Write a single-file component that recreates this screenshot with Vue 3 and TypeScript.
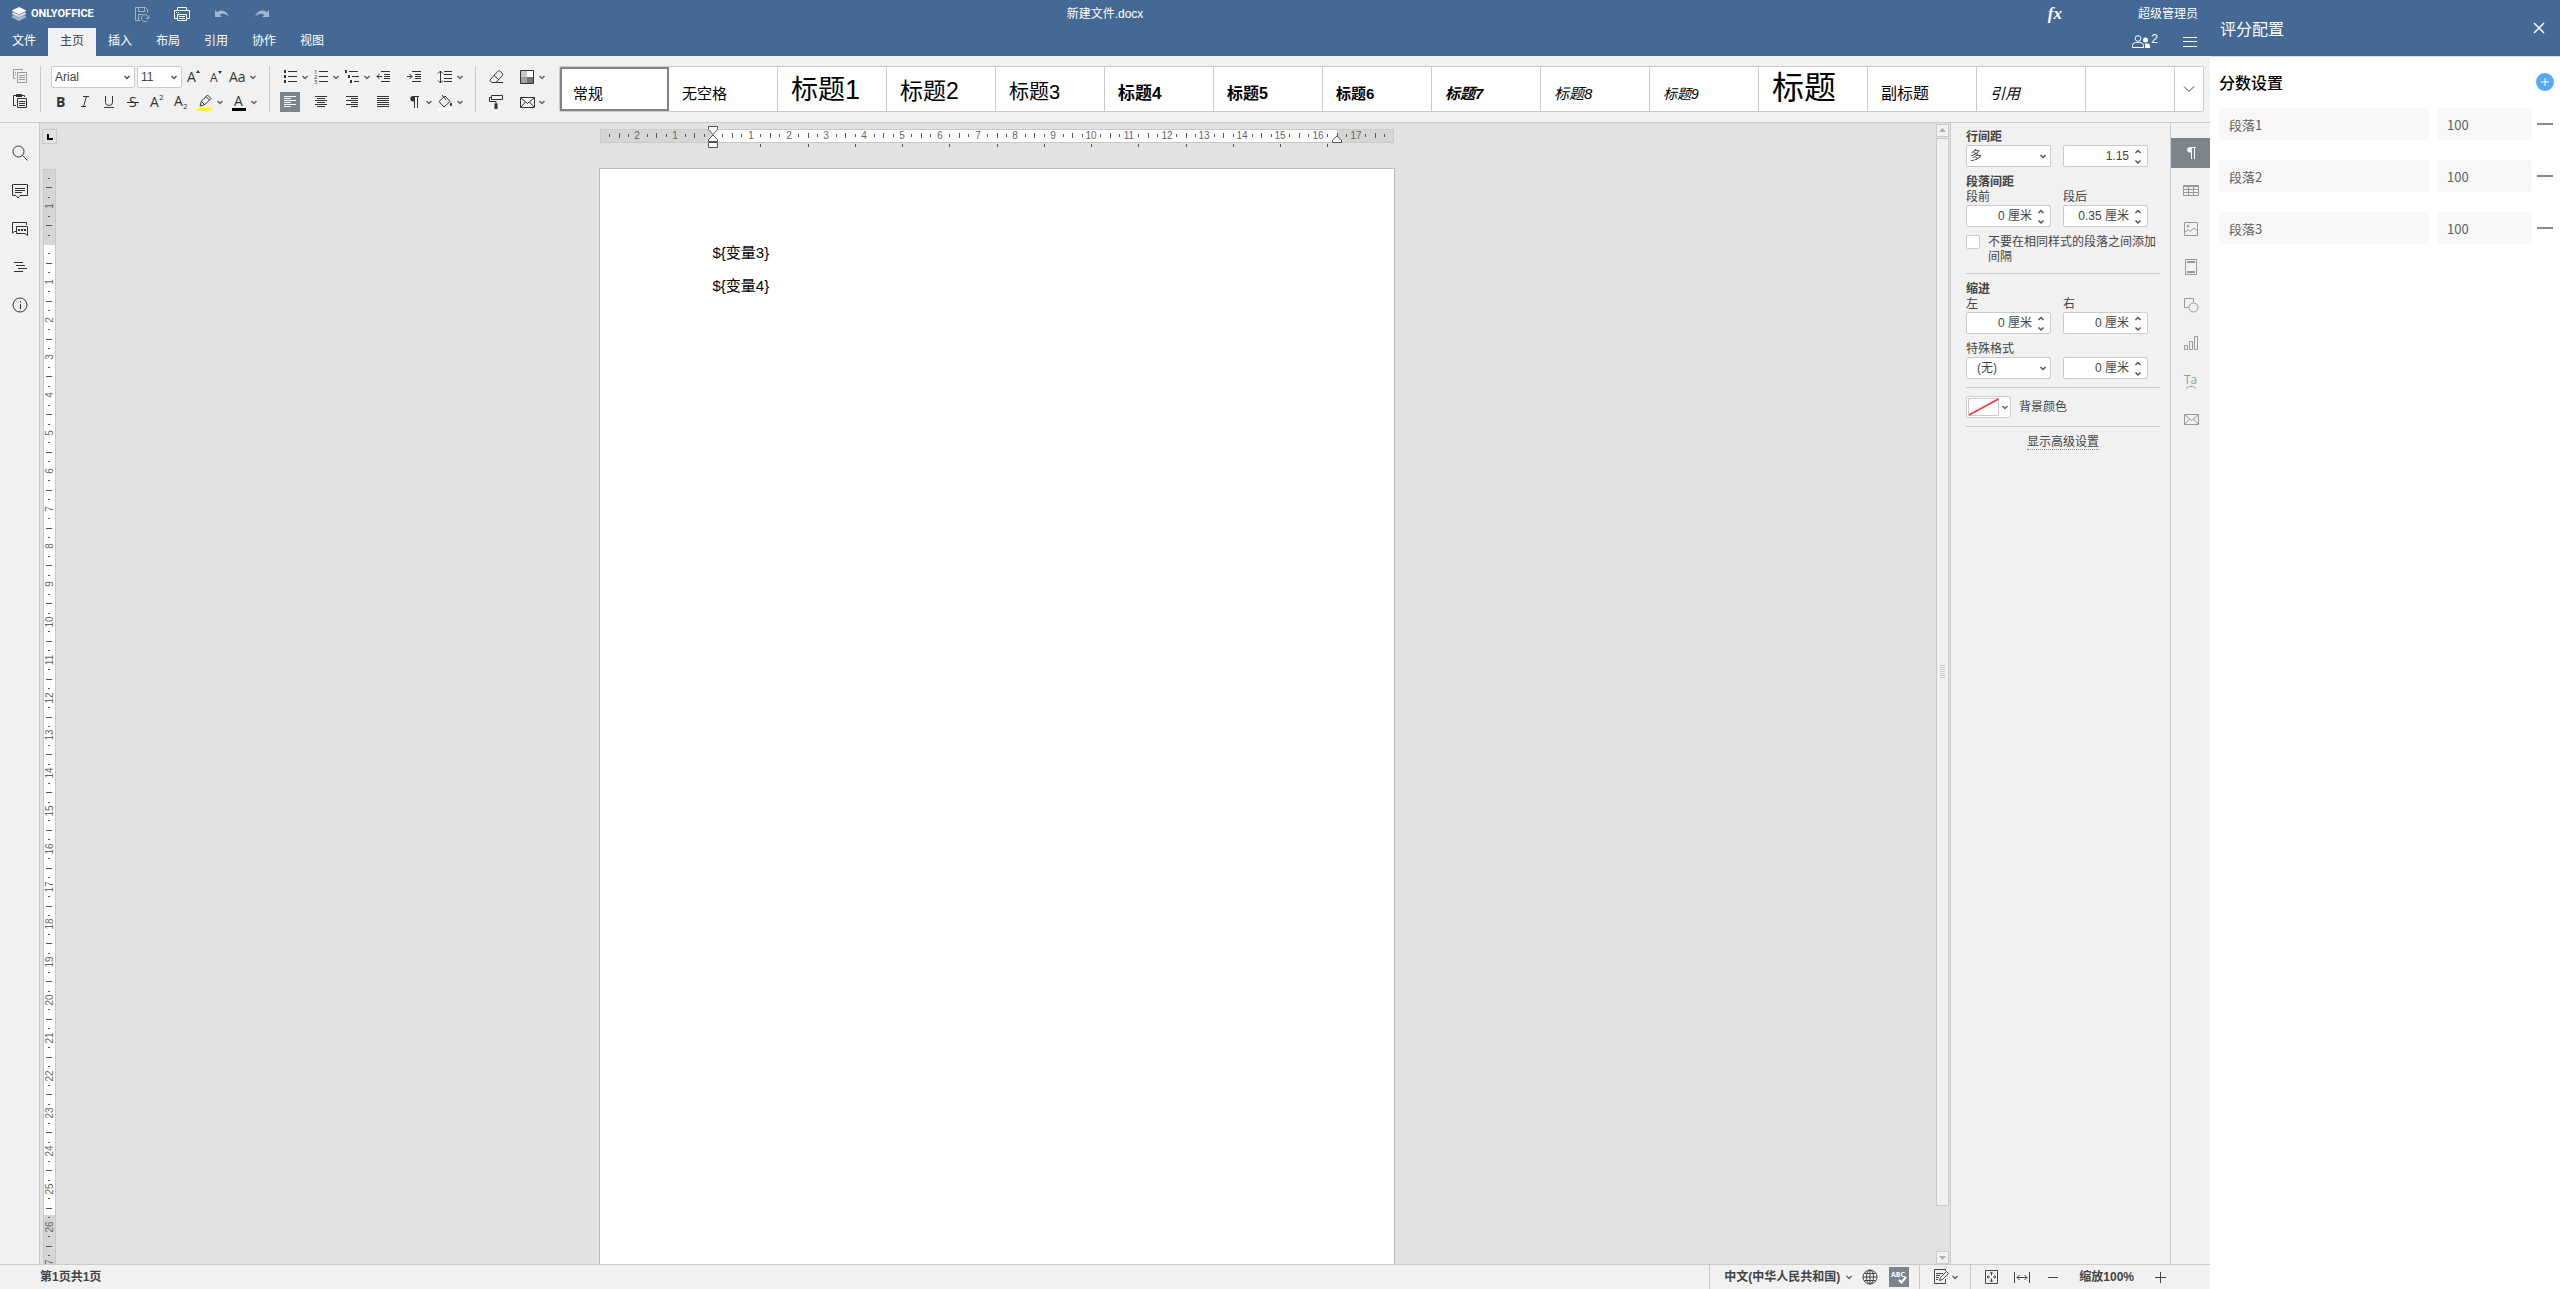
<script setup lang="ts">
import { ref } from 'vue'

const CM = 37.8

const icons: Record<string, string> = {
  save: '<path d="M8.5 16.5h-5v-13h10l2 2v3M6.5 3.500v4h6v-4M6.500 16v-5.500h4"/><path d="M16.500 14a3.500 3.500 0 1 0-1.500 3M16.800 11.500v2.800h-2.800"/>',
  print: '<path d="M5.500 6.500v-3h9v3M5.500 14.500h-3v-8h15v8h-3"/><path d="M5.500 10.500h9v6h-9zM7 12.500h6M7 14.500h6M4 8.500h1M6 8.500h1"/>',
  undo: '<path fill="currentColor" stroke="none" d="M3 6l2.200 2.200c3.800-3.200 9.500-2 11.800 4.800-3-3.500-6.500-4-9.300-2.300L10 13H3z"/>',
  redo: '<path fill="currentColor" stroke="none" d="M17 6l-2.200 2.200C11 5 5.300 6.200 3 13c3-3.500 6.500-4 9.300-2.300L10 13h7z"/>',
  copy: '<path d="M5.500 12.500h-2v-9h9v1M5 6.500h1M5 8.500h1M7.500 6.500h9v10h-9zM9 9.500h6M9 11.500h6M9 13.500h6"/>',
  paste: '<path d="M6 14.500H3.500v-10h11V6M7.500 7.500h9v9h-9zM9 10.500h6M9 12.500h6M9 14.500h6"/><path fill="currentColor" stroke="none" d="M6 3h6v3H6z"/>',
  grow: '<text x="3" y="15" font-size="14">A</text><path fill="currentColor" stroke="none" d="M12 6l2-3 2 3z"/>',
  shrink: '<text x="4" y="15" font-size="12">A</text><path fill="currentColor" stroke="none" d="M12 4h4l-2 3z"/>',
  case: '<text x="1" y="15" font-size="14">Aa</text>',
  bold: '<text x="5" y="15" font-size="14" font-weight="700">B</text>',
  italic: '<path d="M8 4.500h6M6 14.500h5M11.500 4.500l-3 10"/>',
  underline: '<path d="M6.500 4v6.500a3.500 3 0 0 0 7 0V4M5 15.500h10"/>',
  strike: '<text x="6" y="15" font-size="14">S</text><path d="M4 10.500h12"/>',
  sup: '<text x="3" y="15" font-size="14">A</text><text x="12" y="8" font-size="8">2</text>',
  sub: '<text x="3" y="14" font-size="14">A</text><text x="12" y="17" font-size="8">2</text>',
  marker: '<path d="M5 14l1.500-5 6-6 3.500 3.500-6 6zM6.500 9.500l3 3M11 4.500l3.500 3.500"/><path fill="#ff0" stroke="none" d="M3 16h14v3H3z"/>',
  color: '<text x="5" y="14" font-size="14">A</text><path fill="#000" stroke="none" d="M3 16h14v3H3z"/>',
  bullets: '<path d="M8 4.500h9M8 9.500h9M8 14.500h9"/><path fill="currentColor" stroke="none" d="M4 3h2v3H4zM4 8h2v3H4zM4 13h2v3H4z"/>',
  numbers: '<path d="M8 4.500h9M8 9.500h9M8 14.500h9"/><text x="3" y="7" font-size="6">1</text><text x="3" y="12" font-size="6">2</text><text x="3" y="17" font-size="6">3</text>',
  multi: '<path d="M7 4.500h9M10 9.500h7M12 14.500h5"/><path fill="currentColor" stroke="none" d="M3 3h2v3H3zM6 8h2v3H6zM8 13h2v3H8z"/>',
  outdent: '<path d="M8 4.500h9M11 7.500h6M11 9.500h6M11 11.500h6M8 14.500h9M9 9.500H4M6.500 7L4 9.500 6.500 12"/>',
  indent: '<path d="M8 4.500h9M11 7.500h6M11 9.500h6M11 11.500h6M8 14.500h9M3 9.500h5M5.500 7L8 9.500 5.500 12"/>',
  spacing: '<path d="M9 4.500h8M9 7.500h8M9 11.500h8M9 14.500h8M5.500 4v12M3 6.500L5.500 4 8 6.500M3 13.500L5.500 16 8 13.500"/>',
  left: '<path d="M4 4.500h12M4 6.500h7M4 8.500h12M4 10.500h7M4 12.500h12M4 14.500h7"/>',
  center: '<path d="M4 4.500h12M6 6.500h8M4 8.500h12M6 10.500h8M4 12.500h12M6 14.500h8"/>',
  right: '<path d="M4 4.500h12M9 6.500h7M4 8.500h12M9 10.500h7M4 12.500h12M9 14.500h7"/>',
  justify: '<path d="M4 4.500h12M4 6.500h12M4 8.500h12M4 10.500h12M4 12.500h12M4 14.500h12"/>',
  pilcrow: '<path fill="currentColor" stroke="none" d="M9 4h6v1h-1v11h-1V5h-2v11h-1v-6.500H9A2.700 2.700 0 0 1 9 4z"/>',
  fill: '<path d="M4 9.500L10 4l5 5.500-6 5.500zM7 3l4 5"/><path fill="currentColor" stroke="none" d="M16 10c1.500 2 1.500 4 0 4s-1.500-2 0-4z"/><path fill="#fff" stroke="none" d="M3 16h14v3H3z"/>',
  eraser: '<path d="M4 13l7.500-8.500c1-1 2-1 3 0l1.500 1.500c1 1 1 2 0 3L10 15.500H6L4 13.800zM8 8.500l5 4.500M10 15.500h7"/>',
  scheme: '<path fill="#c8c8c8" stroke="none" d="M4 4h6v6H4z"/><path fill="#fff" stroke="none" d="M10 4h6v6h-6z"/><path fill="#a0a0a0" stroke="none" d="M4 10h6v6H4z"/><path fill="#777" stroke="none" d="M10 10h6v6h-6z"/><path d="M3.500 3.500h13v13h-13z"/>',
  roller: '<path d="M5.500 3.500h11v4h-11zM5 5.500H3.500v4h6.500V12"/><path fill="currentColor" stroke="none" d="M8.500 11.500h3V17h-3z"/>',
  mail: '<path d="M3.500 5.500h14v10h-14zM4 6l6.500 5.500L17 6M4 15l4.500-5M17 15l-4.500-5"/>',
  search: '<circle cx="8.500" cy="8.500" r="5.500"/><path d="M12.500 12.500l5 5"/>',
  comment: '<path d="M2.500 3.500h15v11H10l-2 2.500-2-2.500H2.500zM5 7.500h10M5 9.500h10M5 11.500h7"/>',
  chat: '<path d="M6 12.500H4.500L2.500 14V3.500h14V6"/><path d="M6.500 7.500h11v9l-2.500-2H6.500z"/><path fill="currentColor" stroke="none" d="M8 10h2v2H8zM11 10h2v2h-2zM14 10h2v2h-2z"/>',
  nav: '<path d="M4 5.500h9M6 8.500h9M8 11.500h9M4 14.500h9"/>',
  info: '<circle cx="10" cy="10" r="7"/><path d="M10.500 9v5M10.500 6v1.500"/>',
  table: '<path d="M2.500 4.500h15v10h-15zM2.500 5.500h15M2.500 8.500h15M2.500 11.500h15M7.500 5v10M12.500 5v10"/>',
  image: '<path d="M3.500 3.500h13v13h-13zM4 13l3-2.500 2 2L13 9l3.500 3"/><circle cx="7" cy="7" r="1"/>',
  header: '<path d="M4.500 2.500h11v15h-11z"/><path fill="currentColor" stroke="none" d="M6 4h8v2H6zM6 14h8v2H6z"/>',
  shape: '<path d="M7 12.500H3.500v-9h9V7"/><circle cx="12.500" cy="12.500" r="4.500"/>',
  chart: '<path d="M3.500 12.500h3v4h-3zM8.500 8.500h3v8h-3zM13.500 3.500h3v13h-3z"/>',
  textart: '<text x="3" y="13" font-size="12">Ta</text><path d="M5 17.500c3-3 7-3 10 0"/>',
  globe: '<circle cx="10" cy="10" r="7"/><path d="M10 3v14M3 10h14M4.500 6.500h11M4.500 13.500h11"/><ellipse cx="10" cy="10" rx="3.500" ry="7"/>',
  spell: '<text x="2" y="10" font-size="7" font-weight="700">ABC</text><path stroke-width="2" d="M10 13l2.500 2.500L17 10"/>',
  track: '<path d="M15.500 12v4.500h-11v-14h11V4M6 6.500h7M6 8.500h4M6 10.500h3M6 12.500h2"/><path d="M9.500 13.500l1-3 6-6 2 2-6 6z"/>',
  fitPage: '<path d="M4.500 3.500h12v13h-12zM10.500 5v3.500M9 6.500L10.500 5 12 6.500M10.500 11.500V15M9 13.500l1.500 1.500 1.500-1.500M6 10h3M7.500 8.500L6 10l1.500 1.500M12 10h3M13.500 8.500L15 10l-1.500 1.500"/>',
  fitWidth: '<path d="M2.500 5v11M17.500 5v11M5 10.500h10M7.500 8L5 10.500 7.500 13M12.500 8l2.500 2.500-2.500 2.500"/>',
  minus: '<path d="M5 10.500h10"/>',
  plus: '<path d="M5 10.500h11M10.500 5v11"/>',
  users: '<circle cx="7" cy="6.500" r="2.800"/><path d="M1.500 15.500v-2c0-2.500 2-3 5.500-3s5.500.5 5.500 3v2z"/><circle cx="14.500" cy="8" r="2.500" fill="currentColor" stroke="none"/><path fill="currentColor" stroke="none" d="M14 11.500h3c1.500.5 2 1.500 2 2.500v2h-5z"/>',
  menu: '<path d="M3 5.500h14M3 9.500h14M3 14.500h14"/>',
}

interface Tool { icon: string; title: string; more?: boolean; active?: boolean; off?: boolean }

const tabs = ['文件', '主页', '插入', '布局', '引用', '协作', '视图']
const activeTab = ref('主页')

const clipboard: Tool[] = [
  { icon: 'copy', title: '复制', off: true },
  { icon: 'paste', title: '粘贴' },
]
const sizeTools: Tool[] = [
  { icon: 'grow', title: '增大字号' },
  { icon: 'shrink', title: '减小字号' },
  { icon: 'case', title: '更改大小写', more: true },
]
const fontTools: Tool[] = [
  { icon: 'bold', title: '加粗' },
  { icon: 'italic', title: '斜体' },
  { icon: 'underline', title: '下划线' },
  { icon: 'strike', title: '删除线' },
  { icon: 'sup', title: '上标' },
  { icon: 'sub', title: '下标' },
  { icon: 'marker', title: '突出显示', more: true },
  { icon: 'color', title: '字体颜色', more: true },
]
const paraTools: Tool[] = [
  { icon: 'bullets', title: '项目符号', more: true },
  { icon: 'numbers', title: '编号', more: true },
  { icon: 'multi', title: '多级列表', more: true },
  { icon: 'outdent', title: '减少缩进' },
  { icon: 'indent', title: '增加缩进' },
  { icon: 'spacing', title: '行距', more: true },
  { icon: 'left', title: '左对齐', active: true },
  { icon: 'center', title: '居中' },
  { icon: 'right', title: '右对齐' },
  { icon: 'justify', title: '两端对齐' },
  { icon: 'pilcrow', title: '非打印字符', more: true },
  { icon: 'fill', title: '底纹', more: true },
]
const extraTools: Tool[] = [
  { icon: 'eraser', title: '清除样式' },
  { icon: 'scheme', title: '配色方案', more: true },
  { icon: 'roller', title: '复制样式' },
  { icon: 'mail', title: '邮件合并', more: true },
]

const styles = [
  { name: '常规', cls: 's15' },
  { name: '无空格', cls: 's15' },
  { name: '标题1', cls: 's27' },
  { name: '标题2', cls: 's23' },
  { name: '标题3', cls: 's20' },
  { name: '标题4', cls: 's17 b' },
  { name: '标题5', cls: 's16 b' },
  { name: '标题6', cls: 's15 b' },
  { name: '标题7', cls: 's15 b i' },
  { name: '标题8', cls: 's15 i' },
  { name: '标题9', cls: 's14 i' },
  { name: '标题', cls: 's32' },
  { name: '副标题', cls: 's16' },
  { name: '引用', cls: 's15 i' },
]
const activeStyle = ref('常规')

const leftTools: Tool[] = [
  { icon: 'search', title: '查找' },
  { icon: 'comment', title: '批注' },
  { icon: 'chat', title: '聊天' },
  { icon: 'nav', title: '导航' },
  { icon: 'info', title: '关于' },
]
const rightTools: Tool[] = [
  { icon: 'pilcrow', title: '段落设置', active: true },
  { icon: 'table', title: '表格设置' },
  { icon: 'image', title: '图片设置' },
  { icon: 'header', title: '页眉和页脚设置' },
  { icon: 'shape', title: '形状设置' },
  { icon: 'chart', title: '图表设置' },
  { icon: 'textart', title: '艺术字设置' },
  { icon: 'mail', title: '邮件合并' },
]

interface Mark { pos: number; kind: 'num' | 'half' | 'quarter'; label: string }

function marks(origin: number, from: number, to: number): Mark[] {
  const out: Mark[] = []
  for (let q = from; q <= to; q++) {
    if (q === 0) continue
    const kind = q % 4 === 0 ? 'num' : q % 2 === 0 ? 'half' : 'quarter'
    out.push({ pos: Math.round(origin + (q * CM) / 4), kind, label: String(Math.abs(q) / 4) })
  }
  return out
}

const hMarks = marks(113, -11, 71)
const vMarks = marks(75, -7, 110)
const tabStops = Array.from({ length: 13 }, (_, i) => Math.round(113 + (i + 1) * CM * 1.25))

const paragraphs = ['${变量3}', '${变量4}']
const scores = ref([
  { name: '段落1', score: '100' },
  { name: '段落2', score: '100' },
  { name: '段落3', score: '100' },
])

const before = ref('0 厘米')
const after = ref('0.35 厘米')
const lineValue = ref('1.15')
const indentLeft = ref('0 厘米')
const indentRight = ref('0 厘米')
const special = ref('0 厘米')

function addScore() {
  scores.value.push({ name: `段落${scores.value.length + 1}`, score: '100' })
}
</script>

<template>
  <div class="app">
    <div class="office">
      <header class="top">
        <div class="title-row">
          <div class="brand">
            <svg class="logo" width="16" height="16" viewBox="0 0 16 16">
              <path fill="#fff" fill-opacity=".5" d="M1 10l1.500-.7L8 11.700l5.500-2.400L15 10v1.500l-7 3.500-7-3.500z" />
              <path fill="#fff" fill-opacity=".75" d="M1 7l1.500-.7L8 8.700l5.500-2.400L15 7v1.200l-7 3.300-7-3.300z" />
              <path fill="#fff" d="M8 1l7 3.200v.8L8 8.200 1 5v-.8z" />
            </svg>
            <span class="brand-name">ONLYOFFICE</span>
            <div class="quick">
              <button class="tool dim" aria-label="保存"><svg class="ico" viewBox="0 0 20 20" v-html="icons.save" /></button>
              <button class="tool" aria-label="打印"><svg class="ico" viewBox="0 0 20 20" v-html="icons.print" /></button>
              <button class="tool dim" aria-label="撤销"><svg class="ico" viewBox="0 0 20 20" v-html="icons.undo" /></button>
              <button class="tool dim" aria-label="重做"><svg class="ico" viewBox="0 0 20 20" v-html="icons.redo" /></button>
            </div>
          </div>
          <div class="doc-name">新建文件.docx</div>
          <div class="account">
            <span class="fx">fx</span>
            <span>超级管理员</span>
          </div>
        </div>
        <div class="tab-row">
          <nav class="tabs">
            <button v-for="t in tabs" :key="t" class="tab" :class="{ on: t === activeTab }" @click="activeTab = t">{{ t }}</button>
          </nav>
          <div class="people">
            <button class="people-btn" aria-label="用户"><svg class="ico" viewBox="0 0 20 20" v-html="icons.users" /><span>2</span></button>
            <button class="tool" aria-label="菜单"><svg class="ico" viewBox="0 0 20 20" v-html="icons.menu" /></button>
          </div>
        </div>
      </header>

      <div class="toolbar">
        <div class="group clip">
          <button v-for="t in clipboard" :key="t.icon" class="tool" :class="{ off: t.off }" :aria-label="t.title">
            <svg class="ico" viewBox="0 0 20 20" v-html="icons[t.icon]" />
          </button>
        </div>
        <div class="sep" />
        <div class="group">
          <div class="row first">
            <label class="combo font-name">
              <select aria-label="字体"><option>Arial</option></select>
              <svg class="arrow" viewBox="0 0 10 10"><path d="M2.500 4L5 6.500 7.500 4" /></svg>
            </label>
            <label class="combo font-size">
              <select aria-label="字号"><option>11</option></select>
              <svg class="arrow" viewBox="0 0 10 10"><path d="M2.500 4L5 6.500 7.500 4" /></svg>
            </label>
            <div v-for="t in sizeTools" :key="t.icon" class="split">
              <button class="tool" :aria-label="t.title"><svg class="ico" viewBox="0 0 20 20" v-html="icons[t.icon]" /></button>
              <button v-if="t.more" class="more" :aria-label="t.title"><svg class="chev" viewBox="0 0 10 10"><path d="M2.500 4L5 6.500 7.500 4" /></svg></button>
            </div>
          </div>
          <div class="row">
            <div v-for="t in fontTools" :key="t.icon" class="split">
              <button class="tool" :aria-label="t.title"><svg class="ico" viewBox="0 0 20 20" v-html="icons[t.icon]" /></button>
              <button v-if="t.more" class="more" :aria-label="t.title"><svg class="chev" viewBox="0 0 10 10"><path d="M2.500 4L5 6.500 7.500 4" /></svg></button>
            </div>
          </div>
        </div>
        <div class="sep" />
        <div class="grid six">
          <div v-for="t in paraTools" :key="t.icon" class="split">
            <button class="tool" :class="{ active: t.active }" :aria-label="t.title"><svg class="ico" viewBox="0 0 20 20" v-html="icons[t.icon]" /></button>
            <button v-if="t.more" class="more" :aria-label="t.title"><svg class="chev" viewBox="0 0 10 10"><path d="M2.500 4L5 6.500 7.500 4" /></svg></button>
          </div>
        </div>
        <div class="sep" />
        <div class="grid two">
          <div v-for="t in extraTools" :key="t.icon" class="split">
            <button class="tool" :aria-label="t.title"><svg class="ico" viewBox="0 0 20 20" v-html="icons[t.icon]" /></button>
            <button v-if="t.more" class="more" :aria-label="t.title"><svg class="chev" viewBox="0 0 10 10"><path d="M2.500 4L5 6.500 7.500 4" /></svg></button>
          </div>
        </div>
        <div class="gallery">
          <button v-for="s in styles" :key="s.name" class="style" :class="{ picked: s.name === activeStyle }" @click="activeStyle = s.name">
            <span :class="s.cls">{{ s.name }}</span>
          </button>
          <div class="style-rest" />
          <button class="gallery-more" aria-label="更多样式">
            <svg width="16" height="16" viewBox="0 0 16 16"><path d="M3 5.500l5 5 5-5" /></svg>
          </button>
        </div>
      </div>

      <div class="work">
        <aside class="rail left-rail">
          <button v-for="t in leftTools" :key="t.icon" class="rail-btn" :aria-label="t.title">
            <svg class="ico" viewBox="0 0 20 20" v-html="icons[t.icon]" />
          </button>
        </aside>

        <main class="editor">
          <div class="v-col">
            <button class="corner" aria-label="制表位"><svg width="13" height="13" viewBox="0 0 13 13"><path fill="#000" d="M4 4h2v4h4v2H4z" /></svg></button>
            <div class="v-ruler">
              <svg width="13" height="1123" viewBox="0 0 13 1123">
                <rect x=".5" y=".5" width="12" height="1122" fill="#d5d5d5" stroke="#c8c8c8" />
                <rect x="1" y="76" width="11" height="970" fill="#fff" />
                <template v-for="m in vMarks" :key="m.pos">
                  <text v-if="m.kind === 'num'" :transform="`translate(10 ${m.pos}) rotate(-90)`">{{ m.label }}</text>
                  <rect v-else-if="m.kind === 'half'" x="3" :y="m.pos" width="6" height="1" />
                  <rect v-else x="5" :y="m.pos" width="2" height="1" />
                </template>
              </svg>
            </div>
          </div>
          <div class="canvas">
            <svg class="h-ruler" width="794" height="22" viewBox="0 0 794 22">
              <rect x=".5" y="3.500" width="793" height="13" fill="#d5d5d5" stroke="#c8c8c8" />
              <rect x="113" y="4" width="624" height="12" fill="#fff" />
              <template v-for="m in hMarks" :key="m.pos">
                <text v-if="m.kind === 'num'" :x="m.pos" y="13">{{ m.label }}</text>
                <rect v-else-if="m.kind === 'half'" :x="m.pos" y="7" width="1" height="5" />
                <rect v-else :x="m.pos" y="8" width="1" height="3" />
              </template>
              <rect v-for="s in tabStops" :key="s" :x="s" y="18" width="1" height="3" />
              <g fill="#fff" stroke="#555">
                <path d="M108.500.5h9v3l-4.500 5-4.500-5z" />
                <path d="M113 9l4.500 4.500v2h-9v-2z" />
                <path d="M108.500 16.500h9v5h-9z" />
                <path d="M737 10l4.500 4v2.500h-9V14z" />
              </g>
            </svg>
            <article class="page">
              <p v-for="p in paragraphs" :key="p">{{ p }}</p>
            </article>
          </div>
          <div class="scroll">
            <button class="scroll-btn" aria-label="向上滚动"><svg width="11" height="11" viewBox="0 0 11 11"><path fill="#adadad" d="M2 7l3.500-4L9 7z" /></svg></button>
            <div class="track">
              <div class="thumb"><i v-for="n in 7" :key="n" /></div>
            </div>
            <button class="scroll-btn" aria-label="向下滚动"><svg width="11" height="11" viewBox="0 0 11 11"><path fill="#adadad" d="M2 4l3.500 4L9 4z" /></svg></button>
          </div>
        </main>

        <aside class="settings">
          <label class="cap strong" for="line-rule">行间距</label>
          <div class="pair">
            <div class="combo">
              <select id="line-rule"><option>多</option></select>
              <svg class="arrow" viewBox="0 0 10 10"><path d="M2.500 4L5 6.500 7.500 4" /></svg>
            </div>
            <div class="spin">
              <input v-model="lineValue" aria-label="行间距值" />
              <svg viewBox="0 0 18 20"><path d="M6.500 7L9 4.500 11.500 7M6.500 14.500L9 17l2.500-2.500" /></svg>
            </div>
          </div>

          <div class="block">
            <div class="cap strong">段落间距</div>
            <div class="pair">
              <div>
                <label class="cap" for="before">段前</label>
                <div class="spin">
                  <input id="before" v-model="before" />
                  <svg viewBox="0 0 18 20"><path d="M6.500 7L9 4.500 11.500 7M6.500 14.500L9 17l2.500-2.500" /></svg>
                </div>
              </div>
              <div>
                <label class="cap" for="after">段后</label>
                <div class="spin">
                  <input id="after" v-model="after" />
                  <svg viewBox="0 0 18 20"><path d="M6.500 7L9 4.500 11.500 7M6.500 14.500L9 17l2.500-2.500" /></svg>
                </div>
              </div>
            </div>
          </div>

          <label class="check">
            <input type="checkbox" />
            <span>不要在相同样式的段落之间添加间隔</span>
          </label>
          <hr />

          <div class="block">
            <div class="cap strong">缩进</div>
            <div class="pair">
              <div>
                <label class="cap" for="ind-left">左</label>
                <div class="spin">
                  <input id="ind-left" v-model="indentLeft" />
                  <svg viewBox="0 0 18 20"><path d="M6.500 7L9 4.500 11.500 7M6.500 14.500L9 17l2.500-2.500" /></svg>
                </div>
              </div>
              <div>
                <label class="cap" for="ind-right">右</label>
                <div class="spin">
                  <input id="ind-right" v-model="indentRight" />
                  <svg viewBox="0 0 18 20"><path d="M6.500 7L9 4.500 11.500 7M6.500 14.500L9 17l2.500-2.500" /></svg>
                </div>
              </div>
            </div>
          </div>

          <div class="block">
            <label class="cap" for="special">特殊格式</label>
            <div class="pair">
              <div class="combo inset">
                <select id="special"><option>(无)</option></select>
                <svg class="arrow" viewBox="0 0 10 10"><path d="M2.500 4L5 6.500 7.500 4" /></svg>
              </div>
              <div class="spin">
                <input v-model="special" aria-label="特殊格式值" />
                <svg viewBox="0 0 18 20"><path d="M6.500 7L9 4.500 11.500 7M6.500 14.500L9 17l2.500-2.500" /></svg>
              </div>
            </div>
          </div>
          <hr />

          <div class="fill-row">
            <button id="bg-color" class="swatch">
              <svg width="31" height="18" viewBox="0 0 31 18"><path d="M.5.5h30v17H.5z" fill="#fff" stroke="#cbcbcb" /><path d="M1 17L30.500 1" stroke="#f33" stroke-width="1.500" /></svg>
              <svg class="chev" viewBox="0 0 10 10"><path d="M2.500 4L5 6.500 7.500 4" /></svg>
            </button>
            <label for="bg-color">背景颜色</label>
          </div>
          <hr />
          <div class="advanced"><a href="#">显示高级设置</a></div>
        </aside>

        <aside class="rail right-rail">
          <button v-for="t in rightTools" :key="t.icon" class="rail-btn" :class="{ active: t.active }" :aria-label="t.title">
            <svg class="ico" viewBox="0 0 20 20" v-html="icons[t.icon]" />
          </button>
        </aside>
      </div>

      <footer class="status">
        <span class="pages">第1页共1页</span>
        <div class="cell lang">
          <button class="text-btn">中文(中华人民共和国)<svg class="chev" viewBox="0 0 10 10"><path d="M2.500 4L5 6.500 7.500 4" /></svg></button>
          <button class="tool" aria-label="文档语言"><svg class="ico" viewBox="0 0 20 20" v-html="icons.globe" /></button>
          <button class="tool active" aria-label="拼写检查"><svg class="ico" viewBox="0 0 20 20" v-html="icons.spell" /></button>
        </div>
        <div class="cell review">
          <button class="tool" aria-label="修订"><svg class="ico" viewBox="0 0 20 20" v-html="icons.track" /></button>
          <button class="more" aria-label="修订选项"><svg class="chev" viewBox="0 0 10 10"><path d="M2.500 4L5 6.500 7.500 4" /></svg></button>
        </div>
        <div class="cell zoom">
          <button class="tool" aria-label="适合页面"><svg class="ico" viewBox="0 0 20 20" v-html="icons.fitPage" /></button>
          <button class="tool" aria-label="适合宽度"><svg class="ico" viewBox="0 0 20 20" v-html="icons.fitWidth" /></button>
          <button class="tool" aria-label="缩小"><svg class="ico" viewBox="0 0 20 20" v-html="icons.minus" /></button>
          <button class="text-btn level">缩放100%</button>
          <button class="tool" aria-label="放大"><svg class="ico" viewBox="0 0 20 20" v-html="icons.plus" /></button>
        </div>
      </footer>
    </div>

    <section class="drawer">
      <header class="drawer-head">
        <h2>评分配置</h2>
        <button aria-label="关闭"><svg width="12" height="12" viewBox="0 0 12 12"><path d="M1 1l10 10M11 1L1 11" /></svg></button>
      </header>
      <div class="drawer-body">
        <div class="score-title">
          <h3>分数设置</h3>
          <button aria-label="添加" @click="addScore">
            <svg width="18" height="18" viewBox="0 0 18 18"><circle cx="9" cy="9" r="9" fill="#57a9fb" /><path d="M5 9h8M9 5v8" stroke="#fff" /></svg>
          </button>
        </div>
        <div v-for="(s, n) in scores" :key="n" class="score">
          <input v-model="s.name" class="score-name" aria-label="名称" />
          <input v-model="s.score" class="score-value" aria-label="分数" />
          <button aria-label="删除" @click="scores.splice(n, 1)"><svg width="18" height="18" viewBox="0 0 18 18"><path d="M1 9h16" stroke="#606266" stroke-width="1.500" /></svg></button>
        </div>
      </div>
    </section>
  </div>
</template>

<style>
body {
  margin: 0;
}
</style>

<style scoped>
.app {
  display: flex;
  height: 100vh;
  overflow: hidden;
  font: 12px/15px "Liberation Sans", "Noto Sans CJK SC", sans-serif;
  color: #444;
  background: #fff;
}
.app * {
  box-sizing: border-box;
}
button,
input,
select {
  font: inherit;
  color: inherit;
  margin: 0;
  padding: 0;
  border: 0;
  background: none;
  border-radius: 0;
}
svg {
  display: block;
  flex: none;
}
.ico {
  width: 20px;
  height: 20px;
  fill: none;
  stroke: currentColor;
  font-family: "Open Sans", sans-serif;
}
.ico :deep(text) {
  fill: currentColor;
  stroke: none;
}
.chev {
  width: 10px;
  height: 10px;
  fill: none;
  stroke: #666;
  stroke-width: 1.5;
}
.office {
  flex: 1;
  min-width: 0;
  display: flex;
  flex-direction: column;
  background: #f1f1f1;
}

/* header */
.top {
  background: #446995;
  color: #fff;
}
.title-row {
  display: grid;
  grid-template-columns: 1fr auto 1fr;
  align-items: center;
  height: 28px;
}
.brand {
  display: flex;
  align-items: center;
  padding-left: 11px;
}
.brand-name {
  width: 68px;
  font: 700 11px/16px Roboto, sans-serif;
  margin-left: 4px;
}
.quick {
  display: flex;
  gap: 20px;
  margin-left: 33px;
}
.dim {
  opacity: 0.5;
}
.account {
  display: flex;
  justify-content: flex-end;
  align-items: center;
  gap: 76px;
  padding-right: 12px;
}
.fx {
  font: italic 700 17px/20px "Liberation Serif", serif;
}
.tab-row {
  display: flex;
  justify-content: space-between;
  height: 28px;
}
.tabs {
  display: flex;
}
.tab {
  padding: 0 12px 2px;
}
.tab.on {
  background: #f1f1f1;
  color: #444;
}
.people {
  display: flex;
  align-items: center;
  gap: 22px;
  padding-right: 10px;
}
.people-btn {
  display: flex;
}

/* toolbar */
.toolbar {
  display: flex;
  height: 67px;
  padding: 10px 6px 10px 10px;
  border-bottom: 1px solid #cbcbcb;
  color: #333;
}
.sep {
  width: 1px;
  height: 46px;
  margin: 0 10px;
  background: #cbcbcb;
}
.group {
  display: flex;
  flex-direction: column;
  gap: 4px;
}
.clip {
  gap: 5px;
}
.off {
  color: #999;
}
.row {
  display: flex;
  gap: 4px;
  height: 20px;
}
.row.first {
  gap: 2px;
  height: 22px;
  align-items: center;
}
.split {
  display: flex;
}
.tool {
  width: 20px;
  height: 20px;
}
.tool.active {
  background: #7d858c;
  color: #fff;
}
.more {
  width: 10px;
  height: 20px;
}
.grid {
  display: grid;
  grid-template-rows: 20px 20px;
  gap: 5px 1px;
  padding-top: 1px;
}
.six {
  grid-template-columns: repeat(6, 30px);
}
.two {
  grid-template-columns: repeat(2, 30px);
}
.combo {
  display: grid;
  grid-template-columns: 1fr 14px;
  align-items: center;
  width: 85px;
  height: 22px;
  border: 1px solid #cbcbcb;
  border-radius: 2px;
  background: #fff;
  color: #444;
}
.combo select {
  grid-area: 1 / 1 / 2 / 3;
  height: 20px;
  padding-left: 3px;
  appearance: none;
}
.combo.inset select {
  padding-left: 10px;
}
.arrow {
  grid-area: 1 / 2;
  justify-self: center;
  width: 10px;
  height: 10px;
  fill: none;
  stroke: #555;
  stroke-width: 1.5;
  pointer-events: none;
}
.font-name {
  width: 84px;
}
.font-size {
  width: 45px;
}
.gallery {
  flex: 1;
  min-width: 0;
  display: flex;
  height: 46px;
  margin-left: 12px;
  border: 1px solid #cbcbcb;
  border-radius: 2px;
  background: #fff;
  color: #000;
  overflow: hidden;
}
.style {
  flex: none;
  display: flex;
  align-items: baseline;
  width: 109px;
  padding-left: 13px;
  border-right: 1px solid #cbcbcb;
  line-height: 1;
  white-space: nowrap;
}
.style::before {
  content: "";
  height: 32px;
}
.picked {
  box-shadow: inset 2px 2px #848484, inset -1px -2px #848484;
  border-right-color: #848484;
}
.style-rest {
  flex: 1;
  border-right: 1px solid #cbcbcb;
}
.gallery-more {
  flex: none;
  display: flex;
  align-items: center;
  justify-content: center;
  width: 28px;
}
.gallery-more svg {
  fill: none;
  stroke: #444;
}
.s14 { font-size: 14px; }
.s15 { font-size: 15px; }
.s16 { font-size: 16px; }
.s17 { font-size: 17px; }
.s20 { font-size: 20px; }
.s23 { font-size: 23px; }
.s27 { font-size: 27px; }
.s32 { font-size: 32px; }
.b { font-weight: 700; }
.i { font-style: italic; }

/* work area */
.work {
  flex: 1;
  min-height: 0;
  display: flex;
}
.rail {
  flex: none;
  display: flex;
  flex-direction: column;
  gap: 8px;
  width: 40px;
  padding-top: 15px;
}
.left-rail {
  border-right: 1px solid #cbcbcb;
  color: #333;
}
.right-rail {
  border-left: 1px solid #cbcbcb;
  color: #999;
}
.rail-btn {
  display: flex;
  align-items: center;
  justify-content: center;
  height: 30px;
}
.rail-btn.active {
  background: #7d858c;
  color: #fff;
}
.editor {
  flex: 1;
  min-width: 0;
  display: flex;
  background: #e2e2e2;
}
.v-col {
  flex: none;
  display: flex;
  flex-direction: column;
  width: 17px;
  padding: 6px 0 0 2px;
}
.corner {
  flex: none;
  width: 15px;
  height: 15px;
  border: 1px solid #c8c8c8;
}
.v-ruler {
  flex: 1;
  min-height: 0;
  margin: 25px 0 0 1px;
  overflow: hidden;
}
.v-ruler rect,
.h-ruler rect {
  shape-rendering: crispEdges;
}
.v-ruler svg,
.h-ruler {
  font-size: 10px;
  fill: #555;
}
.v-ruler text,
.h-ruler text {
  text-anchor: middle;
  fill: #666;
}
.canvas {
  flex: 1;
  min-width: 0;
  display: flex;
  flex-direction: column;
  align-items: center;
  padding-top: 3px;
  overflow: hidden;
}
.page {
  flex: 1;
  width: 796px;
  margin-top: 20px;
  padding: 75px 113px 0;
  border: 1px solid #bbbec2;
  border-bottom: 0;
  background: #fff;
  color: #000;
  font-size: 15px;
  line-height: 18px;
}
.page p {
  margin: 0 0 15px;
}
.scroll {
  flex: none;
  display: flex;
  flex-direction: column;
  gap: 1px;
  width: 14px;
  padding: 1px 1px 0 0;
}
.scroll-btn {
  flex: none;
  width: 13px;
  height: 13px;
  border: 1px solid #cbcbcb;
  background: #f1f1f1;
}
.track {
  flex: 1;
}
.thumb {
  display: flex;
  flex-direction: column;
  align-items: center;
  justify-content: center;
  gap: 1px;
  height: 96%;
  border: 1px solid #cbcbcb;
  background: #f1f1f1;
}
.thumb i {
  width: 5px;
  height: 1px;
  background: #cbcbcb;
}

/* paragraph settings */
.settings {
  flex: none;
  width: 220px;
  padding: 7px 10px 0 15px;
  border-left: 1px solid #cbcbcb;
}
.cap {
  display: block;
}
.strong {
  font-weight: 700;
}
.block {
  margin-top: 8px;
}
.pair {
  display: flex;
  gap: 12px;
}
.spin {
  display: flex;
  width: 85px;
  height: 22px;
  border: 1px solid #cbcbcb;
  border-radius: 2px;
  background: #fff;
}
.spin input {
  flex: 1;
  min-width: 0;
  text-align: right;
}
.spin svg {
  width: 18px;
  height: 20px;
  fill: none;
  stroke: #555;
  stroke-width: 1.5;
}
.check {
  display: flex;
  gap: 8px;
  margin: 8px 0;
}
.check input {
  flex: none;
  appearance: none;
  width: 14px;
  height: 14px;
  border: 1px solid #cbcbcb;
  border-radius: 2px;
  background: #fff;
}
hr {
  height: 1px;
  margin: 8px 0;
  border: 0;
  background: #cbcbcb;
}
.fill-row {
  display: flex;
  align-items: center;
  gap: 8px;
}
.swatch {
  display: flex;
  align-items: center;
  gap: 1px;
  width: 45px;
  height: 22px;
  padding-left: 1px;
  border: 1px solid #cbcbcb;
  border-radius: 2px;
  background: #fff;
}
.advanced {
  text-align: center;
}
.advanced a {
  color: inherit;
  text-decoration: none;
  border-bottom: 1px dotted #888;
}

/* status bar */
.status {
  display: flex;
  height: 25px;
  border-top: 1px solid #cbcbcb;
  font-weight: 700;
  color: #444;
}
.pages {
  margin-right: auto;
  padding: 5px 0 0 40px;
}
.cell {
  display: flex;
  align-items: center;
  border-left: 1px solid #cbcbcb;
}
.lang {
  gap: 9px;
  padding: 0 10px 0 14px;
}
.text-btn {
  display: flex;
  align-items: center;
  gap: 4px;
}
.lang .text-btn {
  margin-right: -3px;
}
.review {
  padding: 0 10px;
}
.zoom {
  gap: 11px;
  padding: 0 40px 0 10px;
}
.level {
  padding: 0 5px;
}

/* score drawer */
.drawer {
  flex: none;
  width: 350px;
  font: 13px/18px "Noto Sans CJK SC", sans-serif;
}
.drawer-head {
  display: flex;
  align-items: center;
  justify-content: space-between;
  height: 57px;
  padding: 0 15px 0 10px;
  border-bottom: 1px solid #dcdcdc;
  background: #446995;
  color: #fff;
}
.drawer-head svg {
  fill: none;
  stroke: #fff;
  stroke-width: 1.5;
}
h2,
h3 {
  margin: 0;
  font: 400 16px/24px "Noto Sans CJK SC", sans-serif;
}
h3 {
  font-weight: 500;
  color: #000;
}
.drawer-body {
  padding: 13px 6px 0 9px;
}
.score-title {
  display: flex;
  align-items: center;
  justify-content: space-between;
  margin-bottom: 14px;
}
.score {
  display: flex;
  align-items: center;
  margin-bottom: 20px;
  color: #606266;
}
.score input {
  height: 32px;
  padding: 0 10px;
  border-radius: 4px;
  background: #f7f7f7;
}
.score-name {
  width: 210px;
  margin-right: 8px;
}
.score-value {
  flex: 1;
  min-width: 0;
  margin-right: 4px;
}
</style>
